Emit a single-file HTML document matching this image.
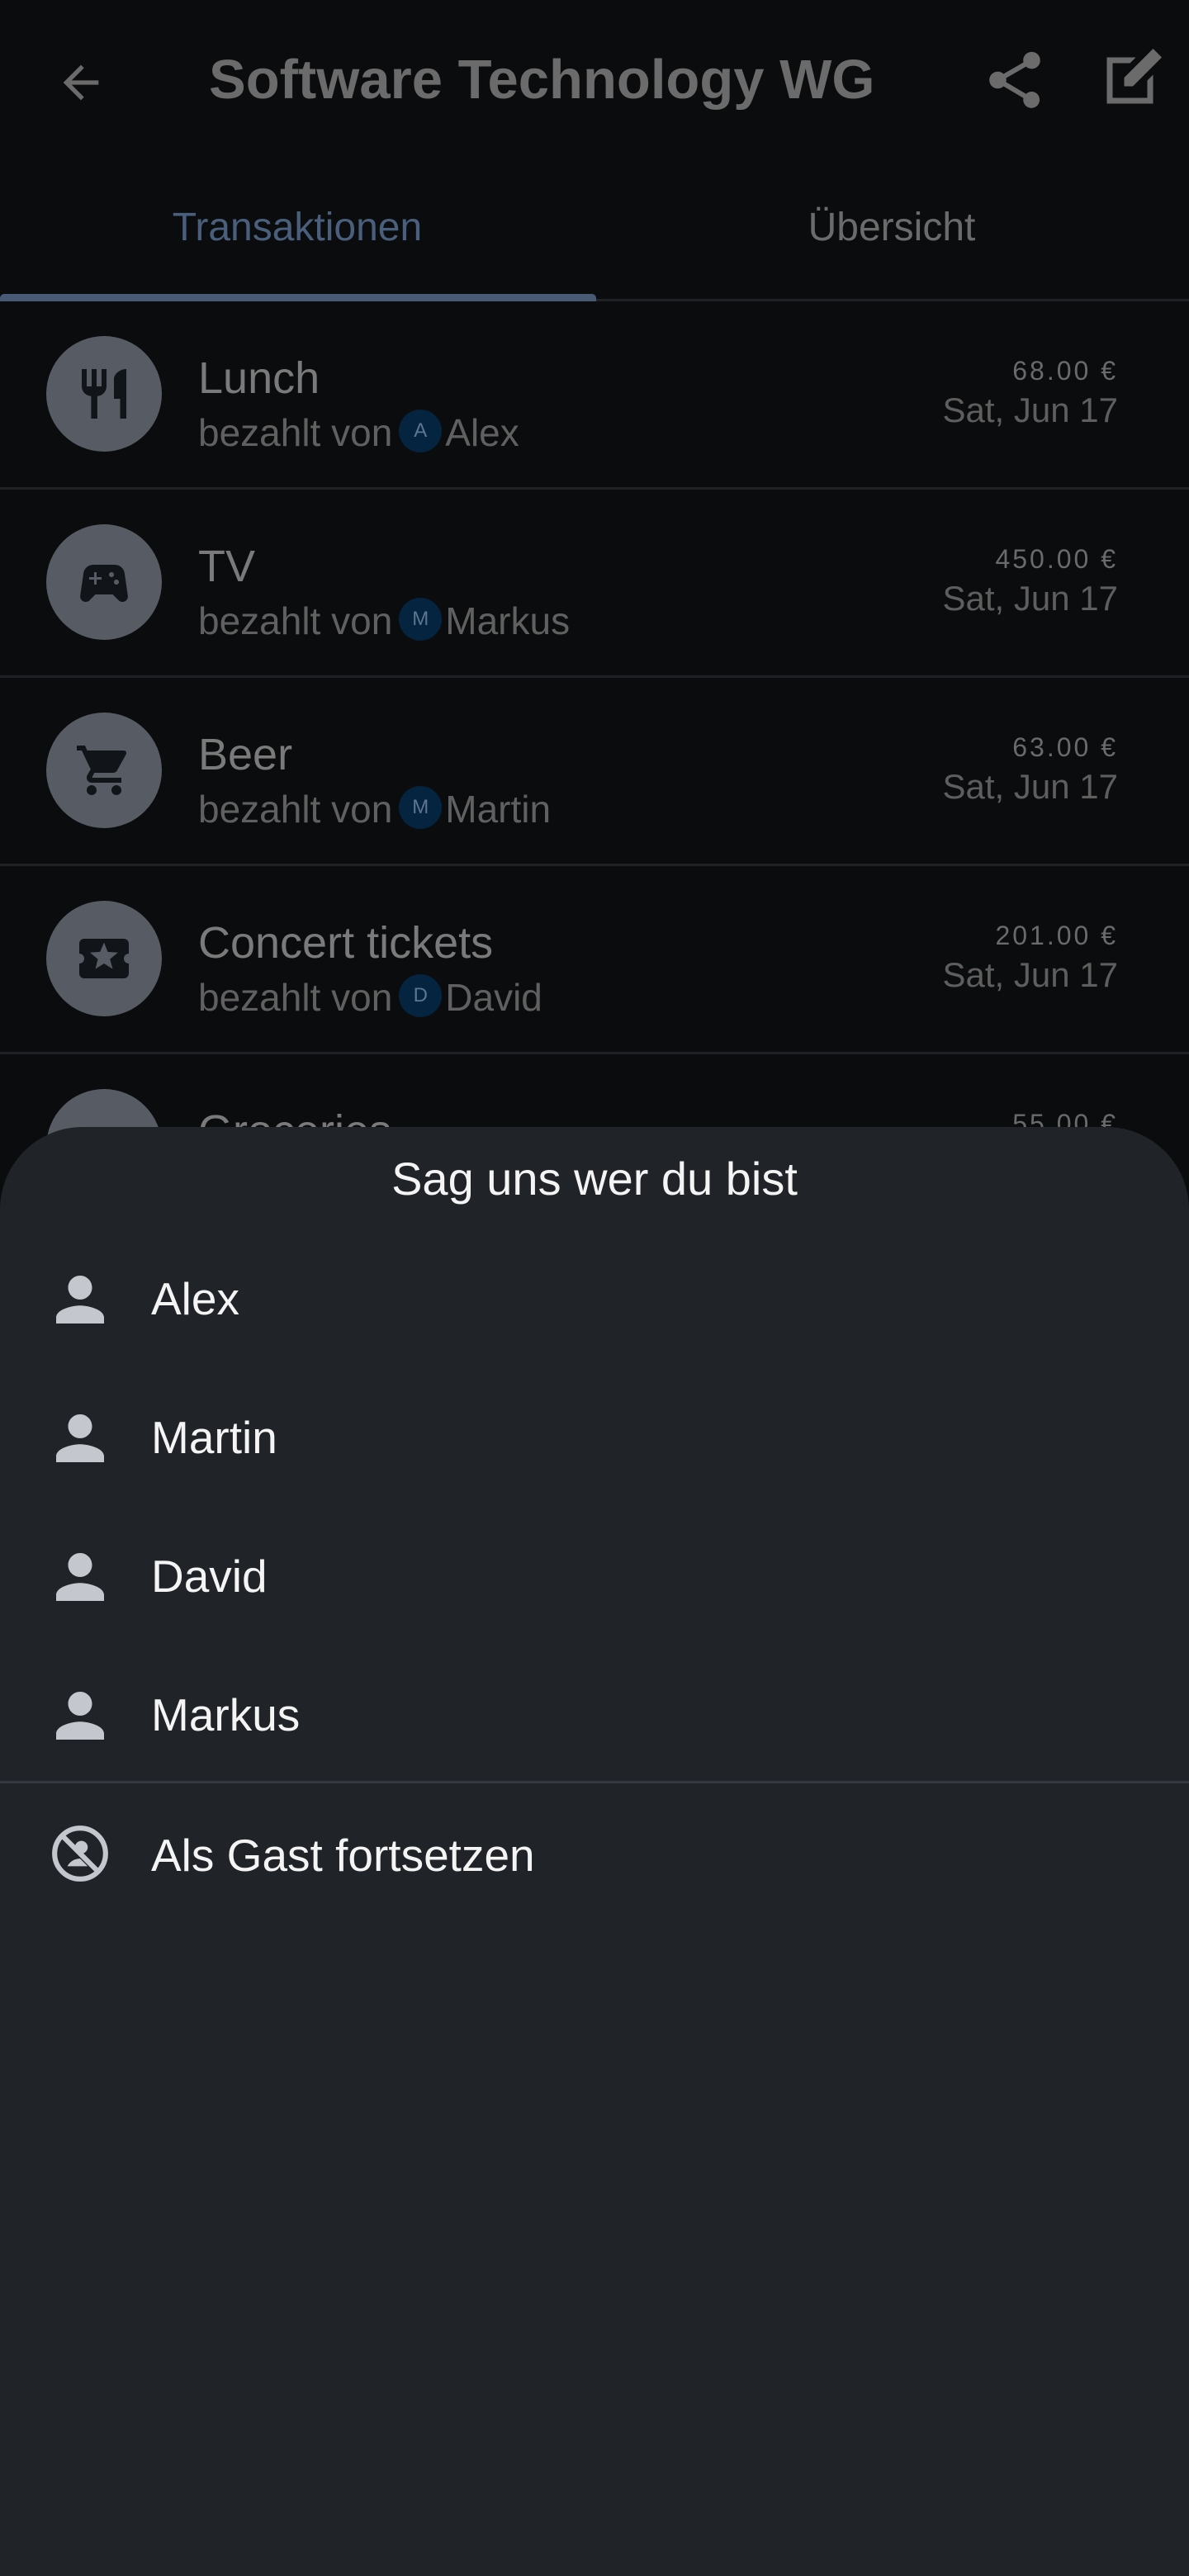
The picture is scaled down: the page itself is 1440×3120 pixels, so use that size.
<!DOCTYPE html>
<html><head><meta charset="utf-8"><style>
*{margin:0;padding:0;box-sizing:border-box}
body{width:1440px;height:3120px;background:#0b0c0e;font-family:"Liberation Sans",sans-serif;position:relative;overflow:hidden;color:#6e6e6e}
.abs{position:absolute}
.row{position:absolute;left:0;width:1440px;height:228px;border-bottom:3px solid #1f2124}
.circ{position:absolute;left:56px;top:42px;width:140px;height:140px;border-radius:50%;background:#575b63}
.circ svg{position:absolute;left:34px;top:34px}
.t{position:absolute;left:240px;top:62px;font-size:54px;color:#7a7a7a}
.s{position:absolute;left:240px;top:132px;font-size:46px;color:#606060;white-space:nowrap}
.av{display:inline-block;height:52px;width:52px;border-radius:26px;background:#052440;color:#5d7690;font-size:24px;text-align:center;line-height:52px;vertical-align:middle;position:relative;top:-6px;margin:0 4px 0 8px}
.am{position:absolute;right:86px;top:66px;font-size:32px;letter-spacing:3px;color:#6a6a6a}
.dt{position:absolute;right:86px;top:108px;font-size:42px;color:#5e5e5e}
.sheet{position:absolute;left:0;top:1365px;width:1440px;height:1755px;background:#202328;border-radius:100px 100px 0 0}
.it{position:absolute;left:183px;font-size:55px;color:#f4f4f4}
.pi{position:absolute;left:68px}
</style></head><body>
<svg class="abs" style="left:66px;top:68px" width="64" height="64" viewBox="0 0 24 24"><path d="M20 11H7.8l5.6-5.6L12 4l-8 8 8 8 1.4-1.4L7.8 13H20z" fill="#6b6b6b"/></svg>
<div class="abs" style="left:253px;top:58px;font-size:67px;font-weight:bold;color:#6b6b6b">Software Technology WG</div>
<svg class="abs" style="left:1188px;top:56px" width="82" height="82" viewBox="0 0 24 24"><path d="M18 16.1c-.8 0-1.5.3-2 .8l-7.1-4.2c.1-.2.1-.5.1-.7s0-.5-.1-.7L16 7.2c.5.5 1.2.8 2 .8 1.7 0 3-1.3 3-3s-1.3-3-3-3-3 1.3-3 3c0 .2 0 .5.1.7L8 9.8C7.5 9.3 6.8 9 6 9c-1.7 0-3 1.3-3 3s1.3 3 3 3c.8 0 1.5-.3 2-.8l7.1 4.2c-.1.2-.1.4-.1.6 0 1.6 1.3 2.9 2.9 2.9s2.9-1.3 2.9-2.9-1.2-2.9-2.8-2.9z" fill="#6b6b6b"/></svg>
<svg class="abs" style="left:1330px;top:52px" width="84" height="84" viewBox="0 0 24 24"><path d="M3 5h10l-2 2H5v12h12v-6l2-2v10H3z M19 2l3 3-10 10H9v-3z" fill="#6b6b6b"/></svg>
<div class="abs" style="left:0;top:248px;width:720px;text-align:center;font-size:48px;color:#4a5f7c">Transaktionen</div>
<div class="abs" style="left:720px;top:248px;width:720px;text-align:center;font-size:48px;color:#6b6b6b">Übersicht</div>
<div class="abs" style="left:0;top:362px;width:1440px;height:3px;background:#1f2124"></div>
<div class="abs" style="left:0;top:356px;width:722px;height:9px;background:#485a74;border-radius:5px 5px 0 0"></div>

<div class="row" style="top:365px"><div class="circ"><svg width="72" height="72" viewBox="0 0 24 24"><path d="M11 9H9V2H7v7H5V2H3v7c0 2.1 1.7 3.8 3.8 3.9V22h2.5v-9.1C11.3 12.8 13 11.1 13 9V2h-2v7zm5-3v8h2.5v8H21V2c-2.8 0-5 2.2-5 4z" fill="#111419"/></svg></div><div class="t">Lunch</div><div class="s">bezahlt von<span class="av">A</span>Alex</div><div class="am">68.00 €</div><div class="dt">Sat, Jun 17</div></div>
<div class="row" style="top:593px"><div class="circ"><svg width="72" height="72" viewBox="0 0 24 24"><path d="M21.6 17.5 20.3 8.4C20 6.4 18.3 5 16.3 5H7.7c-2 0-3.7 1.4-4 3.4l-1.3 9.1c-.2 1.4.9 2.5 2.2 2.5.6 0 1.2-.2 1.6-.7L8.5 17h7l2.3 2.3c.4.4 1 .7 1.6.7 1.4 0 2.4-1.1 2.2-2.5zM11 11H9v2H8v-2H6v-1h2V8h1v2h2v1zm4-1c-.6 0-1-.4-1-1s.4-1 1-1 1 .4 1 1-.4 1-1 1zm2 3c-.6 0-1-.4-1-1s.4-1 1-1 1 .4 1 1-.4 1-1 1z" fill="#111419"/></svg></div><div class="t">TV</div><div class="s">bezahlt von<span class="av">M</span>Markus</div><div class="am">450.00 €</div><div class="dt">Sat, Jun 17</div></div>
<div class="row" style="top:821px"><div class="circ"><svg width="72" height="72" viewBox="0 0 24 24"><path d="M7 18c-1.1 0-2 .9-2 2s.9 2 2 2 2-.9 2-2-.9-2-2-2zM1 2v2h2l3.6 7.6-1.4 2.4c-.1.3-.2.6-.2 1 0 1.1.9 2 2 2h12v-2H7.4c-.1 0-.2-.1-.2-.2v-.1l.9-1.7h7.5c.8 0 1.4-.4 1.7-1l3.6-6.5c.1-.2.1-.3.1-.5 0-.6-.4-1-1-1H5.2l-.9-2H1zm16 16c-1.1 0-2 .9-2 2s.9 2 2 2 2-.9 2-2-.9-2-2-2z" fill="#111419"/></svg></div><div class="t">Beer</div><div class="s">bezahlt von<span class="av">M</span>Martin</div><div class="am">63.00 €</div><div class="dt">Sat, Jun 17</div></div>
<div class="row" style="top:1049px"><div class="circ"><svg width="72" height="72" viewBox="0 0 24 24"><path d="M22 10V6c0-1.1-.9-2-2-2H4c-1.1 0-2 .9-2 2v4c1.1 0 2 .9 2 2s-.9 2-2 2v4c0 1.1.9 2 2 2h16c1.1 0 2-.9 2-2v-4c-1.1 0-2-.9-2-2s.9-2 2-2zm-6.5 6.2L12 14l-3.5 2.2 1-4-3.2-2.6 4.1-.3L12 5.5l1.5 3.8 4.1.3-3.2 2.6 1.1 4z" fill="#111419"/></svg></div><div class="t">Concert tickets</div><div class="s">bezahlt von<span class="av">D</span>David</div><div class="am">201.00 €</div><div class="dt">Sat, Jun 17</div></div>
<div class="row" style="top:1277px"><div class="circ"></div><div class="t">Groceries</div><div class="am">55.00 €</div></div>

<div class="sheet">
<div class="abs" style="left:0;top:30px;width:1440px;text-align:center;font-size:56px;color:#f4f4f4">Sag uns wer du bist</div>
<svg class="pi" style="top:180px" width="58" height="58" viewBox="4 4 16 16"><path d="M12 12c2.2 0 4-1.8 4-4s-1.8-4-4-4-4 1.8-4 4 1.8 4 4 4zm0 2c-2.7 0-8 1.3-8 4v2h16v-2c0-2.7-5.3-4-8-4z" fill="#c4c7ce"/></svg>
<div class="it" style="top:176px">Alex</div>
<svg class="pi" style="top:348px" width="58" height="58" viewBox="4 4 16 16"><path d="M12 12c2.2 0 4-1.8 4-4s-1.8-4-4-4-4 1.8-4 4 1.8 4 4 4zm0 2c-2.7 0-8 1.3-8 4v2h16v-2c0-2.7-5.3-4-8-4z" fill="#c4c7ce"/></svg>
<div class="it" style="top:344px">Martin</div>
<svg class="pi" style="top:516px" width="58" height="58" viewBox="4 4 16 16"><path d="M12 12c2.2 0 4-1.8 4-4s-1.8-4-4-4-4 1.8-4 4 1.8 4 4 4zm0 2c-2.7 0-8 1.3-8 4v2h16v-2c0-2.7-5.3-4-8-4z" fill="#c4c7ce"/></svg>
<div class="it" style="top:512px">David</div>
<svg class="pi" style="top:684px" width="58" height="58" viewBox="4 4 16 16"><path d="M12 12c2.2 0 4-1.8 4-4s-1.8-4-4-4-4 1.8-4 4 1.8 4 4 4zm0 2c-2.7 0-8 1.3-8 4v2h16v-2c0-2.7-5.3-4-8-4z" fill="#c4c7ce"/></svg>
<div class="it" style="top:680px">Markus</div>
<div class="abs" style="left:0;top:792px;width:1440px;height:3px;background:#363a40"></div>
<svg class="abs" style="left:60px;top:843px" width="74" height="74" viewBox="0 0 24 24"><circle cx="12" cy="12" r="10" fill="none" stroke="#c4c7ce" stroke-width="2"/><path d="M5 5l14 14" stroke="#c4c7ce" stroke-width="2"/><circle cx="12.5" cy="9.5" r="2.5" fill="#c4c7ce"/><path d="M7 17c1-2 3-3 5-3l3 3z" fill="#c4c7ce"/></svg>
<div class="it" style="top:850px">Als Gast fortsetzen</div>
</div>
</body></html>
